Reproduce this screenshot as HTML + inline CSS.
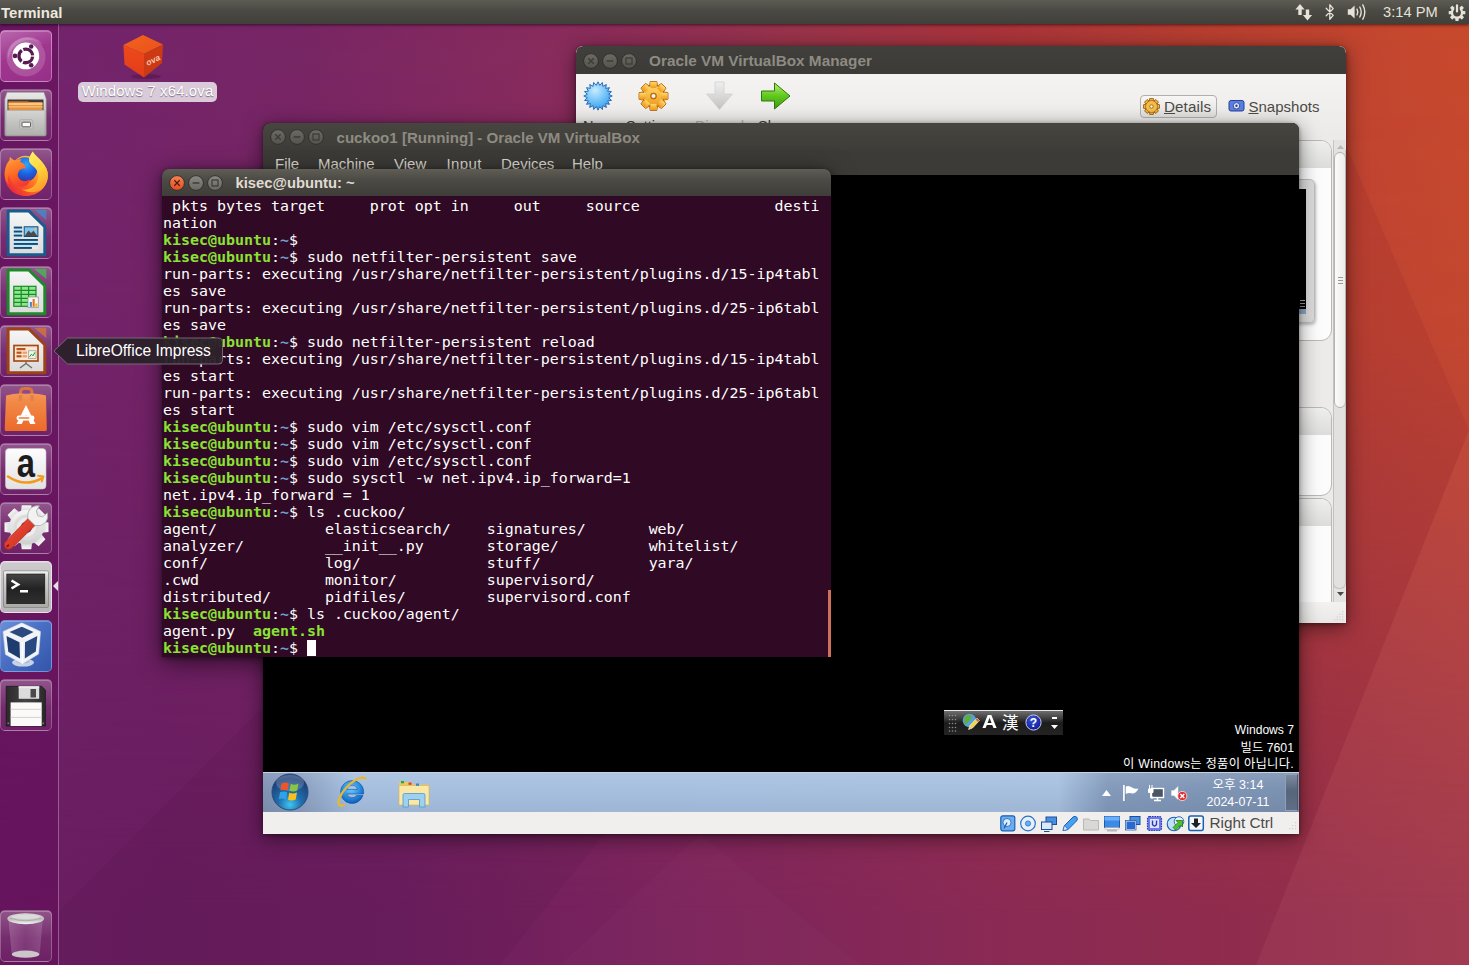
<!DOCTYPE html>
<html><head><meta charset="utf-8"><title>Ubuntu Desktop</title>
<style>
*{box-sizing:border-box;margin:0;padding:0}
html,body{width:1469px;height:965px;overflow:hidden;background:#6b1f5f}
body{position:relative;font-family:"Liberation Sans","Noto Sans CJK KR",sans-serif;font-size:14px;color:#dfdbd2}
.abs{position:absolute}
svg{display:block}
#wall{position:absolute;left:0;top:0;width:1469px;height:965px}
/* top panel */
#panel{position:absolute;left:0;top:0;width:1469px;height:24px;background:linear-gradient(#5d5b54,#4a4943 45%,#403f3a);box-shadow:0 1px 3px rgba(0,0,0,.6);z-index:50}
#panel .ttl{position:absolute;left:1px;top:3.5px;font-weight:bold;font-size:15px;line-height:17px;color:#ece8df;white-space:nowrap}
#panel .clock{position:absolute;left:1383px;top:4px;font-size:14.7px;line-height:17px;color:#e6e2d9;white-space:nowrap}
#panel svg{position:absolute}
/* launcher */
#launcher{position:absolute;left:0;top:24px;width:59px;height:941px;background:rgba(98,10,88,.5);border-right:1px solid rgba(205,160,205,.5);z-index:40}
.tile{position:absolute;left:0;width:52px;height:52px;border-radius:5px;border:1px solid rgba(255,255,255,.25);background:linear-gradient(rgba(255,255,255,.28),rgba(255,255,255,.10) 55%,rgba(255,255,255,.06));overflow:hidden;box-shadow:inset 0 1px 0 rgba(255,255,255,.25)}
.tile svg{position:absolute;left:-1px;top:-1px;width:50px;height:50px}
/* windows */
.win{position:absolute;border-radius:7px 7px 0 0;box-shadow:0 4px 20px rgba(0,0,0,.5),0 1px 4px rgba(0,0,0,.4)}
.tbar{position:absolute;left:0;top:0;right:0;height:28px;border-radius:7px 7px 0 0;background:linear-gradient(#45443f,#3c3b37);}
.tbar .t{position:absolute;top:5px;font-weight:bold;font-size:15px;line-height:17px;white-space:nowrap;color:#8e8b83}
.wb{position:absolute;top:6px;width:16px;height:16px}
pre{font-family:"DejaVu Sans Mono","Liberation Mono",monospace;font-size:14.95px;line-height:17px;color:#fff}
.g{color:#8ae234;font-weight:bold}.b{color:#729fcf;font-weight:bold}
.wm{right:5px;text-align:right;line-height:17px;color:#fff;white-space:nowrap;font-family:"Liberation Sans","Noto Sans CJK KR",sans-serif}
.menu span{position:absolute;top:0;font-size:15px;line-height:17px;color:#dfdbd2;white-space:nowrap}
.box{position:absolute;border:1px solid #b9b8b6;border-radius:11px;background:#fcfcfc;overflow:hidden}
.box i{position:absolute;left:0;right:0;top:0;height:27px;background:linear-gradient(#efefee,#dcdcdb)}
</style></head><body>
<svg id="wall" viewBox="0 0 1469 965" preserveAspectRatio="none">
<defs>
<linearGradient id="wt" x1="0" y1="0" x2="1469" y2="0" gradientUnits="userSpaceOnUse">
<stop offset="0" stop-color="#70226c"/><stop offset=".04" stop-color="#73246c"/><stop offset=".2" stop-color="#782665"/><stop offset=".39" stop-color="#8a2c5c"/><stop offset=".545" stop-color="#99344a"/><stop offset=".68" stop-color="#a9343a"/><stop offset=".817" stop-color="#b73e30"/><stop offset=".95" stop-color="#c5472e"/><stop offset="1" stop-color="#c8492c"/>
</linearGradient>
<linearGradient id="wb2" x1="0" y1="0" x2="1469" y2="0" gradientUnits="userSpaceOnUse">
<stop offset="0" stop-color="#6a1f62"/><stop offset=".12" stop-color="#681c5e"/><stop offset=".27" stop-color="#6b1e5f"/><stop offset=".48" stop-color="#7d245c"/><stop offset=".68" stop-color="#8a2a54"/><stop offset=".85" stop-color="#932f50"/><stop offset="1" stop-color="#9d364e"/>
</linearGradient>
<linearGradient id="wm" x1="0" y1="0" x2="0" y2="965" gradientUnits="userSpaceOnUse">
<stop offset="0" stop-color="#fff" stop-opacity="0"/><stop offset=".35" stop-color="#fff" stop-opacity=".12"/><stop offset=".95" stop-color="#fff" stop-opacity="1"/>
</linearGradient>
<linearGradient id="wdg" x1="1000" y1="0" x2="1330" y2="0" gradientUnits="userSpaceOnUse"><stop offset="0" stop-color="#6a0a28" stop-opacity="0"/><stop offset="1" stop-color="#6a0a28" stop-opacity=".10"/></linearGradient>
<mask id="mk"><rect width="1469" height="965" fill="url(#wm)"/></mask>
</defs>
<rect width="1469" height="965" fill="url(#wt)"/>
<rect width="1469" height="965" fill="url(#wb2)" mask="url(#mk)"/>
<!-- facets -->
<polygon points="58,912 330,640 760,640 500,965 58,965" fill="#000" opacity=".035"/>
<polygon points="560,965 700,834 860,965" fill="#fff" opacity=".016"/>
<polygon points="1303,46 1469,430 1256,965 1000,965 1000,46" fill="url(#wdg)"/>
<polygon points="1469,430 1469,965 1256,965" fill="#ffb0a0" opacity=".045"/>
</svg>

<div id="panel"><span class="ttl">Terminal</span><span class="clock">3:14 PM</span>
<!-- network -->
<svg style="left:1295px;top:3px" width="18" height="18" viewBox="0 0 18 18"><path d="M5 1 L9.6 6.5 H6.7 V12 H3.3 V6.5 H0.4 Z M12.5 17.5 L7.9 12 H10.8 V6.5 H14.2 V12 H17.1 Z" fill="#e6e2d9"/></svg>
<!-- bluetooth -->
<svg style="left:1324px;top:3px" width="12" height="18" viewBox="0 0 12 18"><path d="M2.2 5.2 L9.2 12.4 L5.8 16.3 V1.7 L9.2 5.6 L2.2 12.8" fill="none" stroke="#e6e2d9" stroke-width="1.3" stroke-linejoin="round" stroke-linecap="round"/></svg>
<!-- sound -->
<svg style="left:1347px;top:3px" width="21" height="18" viewBox="0 0 21 18"><path d="M0.8 6.3 H3.6 L7.6 2.6 V15.4 L3.6 11.7 H0.8 Z" fill="#e6e2d9"/><path d="M10 6.2 Q11.6 9 10 11.8 M12.8 4 Q15.6 9 12.8 14 M15.8 1.8 Q19.8 9 15.8 16.2" fill="none" stroke="#e6e2d9" stroke-width="1.4" stroke-linecap="round"/></svg>
<!-- power -->
<svg style="left:1448px;top:3px" width="18" height="18" viewBox="0 0 18 18"><g transform="translate(9 9.600)" fill="#e6e2d9"><g id="pt"><rect x="-1.700" y="-8.300" width="3.400" height="3.600" rx=".6"/></g><use href="#pt" transform="rotate(45)"/><use href="#pt" transform="rotate(90)"/><use href="#pt" transform="rotate(135)"/><use href="#pt" transform="rotate(180)"/><use href="#pt" transform="rotate(225)"/><use href="#pt" transform="rotate(270)"/><use href="#pt" transform="rotate(315)"/><circle r="6.300"/></g><circle cx="9" cy="9.600" r="3.900" fill="#46453f"/><rect x="6.300" y="0" width="5.400" height="8" fill="#4b4a44"/><rect x="7.900" y="1.200" width="2.200" height="8.300" rx="1" fill="#e6e2d9"/></svg>
</div>
<div id="launcher">
<!-- 0 Ubuntu dash -->
<div class="tile" style="top:6px;background:linear-gradient(160deg,#b968ae,#a0378f 45%,#972e88);border-color:rgba(240,190,235,.45)">
<svg viewBox="0 0 50 50"><circle cx="26" cy="27" r="19.500" fill="#fff" opacity=".16"/><path d="M8 30 Q6 14 22 8 Q38 4 44 18 Q40 9 27 10 Q11 13 8 30Z" fill="#fff" opacity=".18"/><circle cx="25.800" cy="25.900" r="13.400" fill="#fff"/>
<circle cx="25.800" cy="25.900" r="6.850" fill="none" stroke="#561c52" stroke-width="3.300" stroke-dasharray="12.750 1.600" stroke-dashoffset="-.8"/>
<g fill="#561c52"><circle cx="15" cy="25.900" r="2.300"/><circle cx="31.200" cy="16.550" r="2.300"/><circle cx="31.200" cy="35.250" r="2.300"/></g></svg></div>
<!-- 1 Files -->
<div class="tile" style="top:65px"><svg viewBox="0 0 50 50">
<defs><linearGradient id="fc" x1="0" y1="0" x2="0" y2="1"><stop offset="0" stop-color="#e9e9e7"/><stop offset="1" stop-color="#a5a5a2"/></linearGradient><linearGradient id="fd" x1="0" y1="0" x2="0" y2="1"><stop offset="0" stop-color="#d5d5d3"/><stop offset="1" stop-color="#b0b0ad"/></linearGradient></defs>
<path d="M7 3.200 H44 L46.200 10 V45.500 Q46.200 47 44.700 47 H6.300 Q4.800 47 4.800 45.500 V10 Z" fill="url(#fc)" stroke="#8f8f8c" stroke-width=".6"/>
<rect x="7.500" y="10.500" width="36" height="11" fill="#3d3b39"/>
<rect x="8.500" y="13" width="34" height="8.500" fill="#e8923c"/><rect x="8.500" y="14.200" width="34" height="1.600" fill="#f8d6a4"/><rect x="8.500" y="17.200" width="34" height="1.300" fill="#f5c080"/><rect x="8.500" y="12.200" width="20" height="1.200" fill="#c96a1c"/>
<rect x="6" y="21.300" width="39" height="25" rx="1.200" fill="url(#fd)" stroke="#9a9a97" stroke-width=".5"/>
<rect x="19.500" y="30.500" width="13.500" height="9.500" rx="2" fill="#c4c4c1" stroke="#a2a29f" stroke-width=".6"/>
<rect x="22" y="33.200" width="8.500" height="4.600" rx=".8" fill="#fbfbfb" stroke="#5e5e5b" stroke-width="1"/>
</svg></div>
<!-- 2 Firefox -->
<div class="tile" style="top:124px"><svg viewBox="0 0 50 50">
<defs><linearGradient id="fg" x1=".9" y1=".1" x2=".15" y2=".95"><stop offset="0" stop-color="#ffe14a"/><stop offset=".3" stop-color="#ffb02e"/><stop offset=".6" stop-color="#ff6a1f"/><stop offset="1" stop-color="#e8243c"/></linearGradient>
<linearGradient id="fy" x1=".3" y1="0" x2=".6" y2="1"><stop offset="0" stop-color="#fff46a"/><stop offset=".5" stop-color="#ffd23a"/><stop offset="1" stop-color="#ff9a2a"/></linearGradient>
<linearGradient id="fh" x1=".2" y1="0" x2=".6" y2="1"><stop offset="0" stop-color="#ff9f3a"/><stop offset=".55" stop-color="#ff6a22"/><stop offset="1" stop-color="#f23a30"/></linearGradient>
<radialGradient id="fb" cx=".55" cy=".3" r=".75"><stop offset="0" stop-color="#2fa8ff"/><stop offset=".55" stop-color="#1c5fe0"/><stop offset="1" stop-color="#3b2d9c"/></radialGradient></defs>
<path d="M32.500 3.600 C35 7.500 39 10 42 14 C46 18.500 48 23 47.900 28 C47.500 39 38 48 26 48 C13 48 4.700 38.500 4.700 27 C4.700 20 7 15 9.500 12.500 L10 9 C11.500 11 13 12 15 12.500 C19 8 25 6.500 30 8.500 C31 6.500 32 5.500 32.500 3.600 Z" fill="url(#fg)"/>
<circle cx="25" cy="21.500" r="12.200" fill="url(#fb)"/>
<path d="M32.500 3.600 C35 7.500 39 10 42 14 C46 18.500 48 23 47.900 28 C47.700 33 45.500 37.500 42 41 C35 46 27 44.500 22 41.500 C30 42.500 37 38 38 30 C38.500 26 37.500 23.500 36.600 22 C34.500 18 30 17 29 13 C28.500 9.500 31 6.500 32.500 3.600 Z" fill="url(#fy)"/>
<path d="M4.700 27 C4.700 20 7 15 9.500 12.500 L10 9 C11.500 11 13 12 15 12.500 C17 11.300 19.500 11 21.500 11.500 L20 14 C23 14.500 25.500 17 26 20.500 C23 20 20.500 21 19 23 C17 26 17.500 29 20 31.500 C23 34 27.500 33.500 30 31 C30 36 25 39.500 19.500 38.500 C12 37 9 31 9.500 26 C7.500 29 7.500 33 9 36.500 C6 34 4.700 30.500 4.700 27 Z" fill="url(#fh)"/>
</svg></div>
<!-- 3 Writer -->
<div class="tile" style="top:183px"><svg viewBox="0 0 50 50">
<defs><linearGradient id="dw" x1="0" y1="0" x2="0" y2="1"><stop offset="0" stop-color="#f6f6f6"/><stop offset="1" stop-color="#dadada"/></linearGradient></defs>
<path d="M34 2.800 H46.300 V13 Z" fill="#3f8ecf" opacity=".75"/>
<path d="M8.100 3.900 H28.800 L44.800 19.800 V47.800 H8.100 Z" fill="url(#dw)" stroke="#1a5a8c" stroke-width="3" stroke-linejoin="round"/>
<g fill="#bfe6f8"><rect x="13.800" y="19.800" width="8.400" height="10"/><rect x="13.800" y="32" width="24.100" height="10"/></g>
<g fill="#154a72"><rect x="13.800" y="19.600" width="8.400" height="1.900"/><rect x="13.800" y="23.600" width="8.400" height="1.900"/><rect x="13.800" y="27.600" width="8.400" height="1.900"/><rect x="13.800" y="32" width="24.100" height="1.900"/><rect x="13.800" y="36" width="24.100" height="1.900"/><rect x="13.800" y="40" width="18" height="1.900"/></g>
<rect x="32" y="38.800" width="6" height="3.400" fill="#e9e9e9"/>
<rect x="24.200" y="19.800" width="13.700" height="9.700" fill="#7fc4ee" stroke="#154a72" stroke-width="1"/><path d="M24.700 29 L28.500 23.500 L31 26 L33.500 23.800 L37.400 29 Z" fill="#4a4a4a"/><circle cx="35.500" cy="21.800" r="1.100" fill="#f4c84a"/>
</svg></div>
<!-- 4 Calc -->
<div class="tile" style="top:242px"><svg viewBox="0 0 50 50">
<defs><linearGradient id="dc" x1="0" y1="0" x2="0" y2="1"><stop offset="0" stop-color="#f6f6f6"/><stop offset="1" stop-color="#dadada"/></linearGradient></defs>
<path d="M34 2.800 H46.300 V13 Z" fill="#43c04f" opacity=".75"/>
<path d="M8.100 3.900 H28.800 L44.800 19.800 V47.800 H8.100 Z" fill="url(#dc)" stroke="#1d8a2a" stroke-width="3" stroke-linejoin="round"/>
<rect x="13.800" y="20.300" width="22.200" height="20" fill="#8be88c"/>
<g stroke="#1d8a2a" stroke-width="1.200" fill="none"><path d="M13.800 24.300 H36 M13.800 28.300 H36 M13.800 32.300 H36 M13.800 36.300 H36 M21.200 20.300 V40.300 M28.600 20.300 V40.300"/><rect x="13.800" y="20.300" width="22.200" height="20"/></g>
<rect x="28" y="31" width="10.300" height="10.600" fill="#f6f6f6" stroke="#9a9a9a" stroke-width=".8"/><rect x="29.800" y="36" width="2.100" height="4.800" fill="#3a8ad0"/><rect x="32.600" y="33" width="2.100" height="7.800" fill="#e8731c"/><rect x="35.300" y="37.500" width="2.100" height="3.300" fill="#e8b51c"/>
</svg></div>
<!-- 5 Impress -->
<div class="tile" style="top:301px"><svg viewBox="0 0 50 50">
<defs><linearGradient id="di" x1="0" y1="0" x2="0" y2="1"><stop offset="0" stop-color="#f6f6f6"/><stop offset="1" stop-color="#dadada"/></linearGradient></defs>
<path d="M34 2.800 H46.300 V13 Z" fill="#d9763a" opacity=".75"/>
<path d="M8.100 3.900 H28.800 L44.800 19.800 V47.800 H8.100 Z" fill="url(#di)" stroke="#9c4216" stroke-width="3" stroke-linejoin="round"/>
<rect x="14" y="20.500" width="24" height="15.500" fill="#fbe6d4" stroke="#a84a18" stroke-width="1.700"/>
<rect x="16.500" y="23" width="9" height="2.200" fill="#bc5218"/><rect x="16.500" y="26.600" width="5" height="2.200" fill="#bc5218"/><rect x="16.500" y="30.200" width="5" height="2.200" fill="#bc5218"/><rect x="22.500" y="26.600" width="4.500" height="2.200" fill="#e6a06a"/><rect x="22.500" y="30.200" width="4.500" height="2.200" fill="#e6a06a"/>
<rect x="28.500" y="25.800" width="7.500" height="7.500" fill="#e9f5e4" stroke="#8a8a8a" stroke-width=".6"/><path d="M29.500 31.800 L31.500 29.300 L33 30.800 L35 27.300" stroke="#2a8a2a" stroke-width="1" fill="none"/>
<path d="M26 36.500 V39 M26 38.500 L20 43 M26 38.500 L32 43" stroke="#6f6e68" stroke-width="1.400" fill="none"/>
</svg></div>
<!-- 6 Software -->
<div class="tile" style="top:360px"><svg viewBox="0 0 50 50">
<defs><linearGradient id="sb" x1="0" y1="0" x2="0" y2="1"><stop offset="0" stop-color="#f5955a"/><stop offset=".2" stop-color="#f28a48"/><stop offset="1" stop-color="#ec6a2a"/></linearGradient></defs>
<path d="M20.500 17 V9 Q20.500 4.500 24 4.500 H28.500 Q32 4.500 32 9 V17" fill="none" stroke="#d9743e" stroke-width="3.200"/>
<path d="M6 11.500 Q16 8.500 26 9.800 Q36 8.500 46 11.500 L46.800 45.500 Q46.800 47 45.300 47 H6.200 Q4.700 47 4.700 45.500 Z" fill="url(#sb)"/>
<path d="M20.500 17 V11 M32 17 V11" stroke="#e0804a" stroke-width="3.200" fill="none"/>
<path d="M26 21 L35.500 40 H30.200 L26 30.500 L21.800 40 H16.500 Z" fill="#fff"/>
<rect x="16.500" y="31.600" width="18" height="4.800" rx="2.400" fill="#fff"/><rect x="18.500" y="33.200" width="11" height="1.600" rx=".8" fill="#ee7a38"/>
</svg></div>
<!-- 7 Amazon -->
<div class="tile" style="top:419px"><svg viewBox="0 0 50 50">
<defs><linearGradient id="am" x1="0" y1="0" x2="0" y2="1"><stop offset="0" stop-color="#fdfdfd"/><stop offset="1" stop-color="#e2e2e2"/></linearGradient></defs>
<rect x="5.500" y="5.500" width="40.500" height="40.500" rx="3.500" fill="url(#am)" stroke="#c8c8c8" stroke-width=".6"/>
<text x="0" y="0" font-family="Liberation Sans, sans-serif" font-weight="bold" font-size="41" text-anchor="middle" fill="#1c1c1c" transform="translate(25.800 34) scale(.8 1)">a</text>
<path d="M8 33.500 Q24 44.500 41.500 35.500" stroke="#f39a1e" stroke-width="2.600" fill="none" stroke-linecap="round"/><path d="M38 32.800 L43.500 33.500 L41.800 38.500" fill="none" stroke="#f39a1e" stroke-width="1.900" stroke-linejoin="round" stroke-linecap="round"/>
</svg></div>
<!-- 8 Settings -->
<div class="tile" style="top:478px"><svg viewBox="0 0 50 50">
<defs><linearGradient id="gr" x1="0" y1="0" x2="0" y2="1"><stop offset="0" stop-color="#f6f6f6"/><stop offset="1" stop-color="#cfcfcf"/></linearGradient><linearGradient id="wr" x1="0" y1="0" x2="1" y2="1"><stop offset="0" stop-color="#f0553e"/><stop offset="1" stop-color="#c8271a"/></linearGradient></defs>
<g transform="translate(26.500 25.200)"><g fill="url(#gr)">
<g id="tth"><path d="M-4.800 -22 H4.800 L5.800 -14 H-5.800 Z"/></g>
<use href="#tth" transform="rotate(45)"/><use href="#tth" transform="rotate(90)"/><use href="#tth" transform="rotate(135)"/><use href="#tth" transform="rotate(180)"/><use href="#tth" transform="rotate(225)"/><use href="#tth" transform="rotate(270)"/><use href="#tth" transform="rotate(315)"/>
<circle r="17.300"/></g><circle r="12.800" fill="#dcdcdc"/><circle r="9.500" fill="#ececec"/><circle r="5.600" fill="#7d2a72"/></g>
<path d="M4.800 40.500 Q3.200 43.800 5.600 46.400 Q8.500 48.500 11.500 46.500 L35 23.500 L28 16.500 Z" fill="url(#wr)" stroke="#a82014" stroke-width=".6"/>
<path d="M28 16.500 Q26.500 9.500 32 5.300 Q35.500 3 39.500 3.800 L36.300 9 L37.800 13.800 L42.700 14.800 L47.300 10.800 Q49 16 45.500 20.500 Q41 25 35 23.500 Z" fill="#f2f2f2" stroke="#a0a0a0" stroke-width=".7"/>
<ellipse cx="7.800" cy="43.800" rx="1.800" ry="1.100" fill="#8a1a10" transform="rotate(-45 7.800 43.800)"/>
</svg></div>
<!-- 9 Terminal (active) -->
<div class="tile" style="top:537px;background:linear-gradient(#cdc9cd,#c4c0c4 50%,#b9b5ba);border-color:rgba(235,228,235,.9)"><svg viewBox="0 0 50 50">
<defs><linearGradient id="tm" x1="0" y1="0" x2="0" y2="1"><stop offset="0" stop-color="#454545"/><stop offset=".5" stop-color="#222"/><stop offset="1" stop-color="#303030"/></linearGradient><linearGradient id="tf" x1="0" y1="0" x2="0" y2="1"><stop offset="0" stop-color="#f4f4f4"/><stop offset=".2" stop-color="#d4d4d2"/><stop offset="1" stop-color="#a9a9a6"/></linearGradient></defs>
<rect x="3.500" y="9.800" width="45" height="36.700" rx="1.500" fill="url(#tf)" stroke="#7f7f7c" stroke-width=".7"/>
<rect x="6.800" y="13" width="38" height="29.700" fill="url(#tm)" stroke="#111" stroke-width=".6"/>
<path d="M11.500 19.500 L18 23.500 L11.500 27.500" fill="none" stroke="#fff" stroke-width="2.600"/><rect x="20" y="29" width="8" height="2.500" fill="#fff"/>
</svg></div>
<!-- 10 VirtualBox -->
<div class="tile" style="top:596px;background:linear-gradient(135deg,#6c8fd9,#4a6fc2 45%,#3355aa);border-color:rgba(150,175,235,.55)"><svg viewBox="0 0 50 50">
<ellipse cx="23" cy="42.600" rx="11" ry="4" fill="#c7d2e8"/><path d="M16.500 33 H29.500 V42 Q23 45 16.500 42 Z" fill="#a9b8d6"/>
<path d="M21.800 2.800 L40.600 11.500 L38.700 34 L22.400 44 L5.400 34.500 L3 11.500 Z" fill="#f0f3f8" stroke="#c8d0de" stroke-width=".5"/>
<path d="M21.800 6.800 L33.500 12 L22.300 17.800 L9.500 12 Z" fill="#2a4a7f"/>
<path d="M6.500 16 L19.500 22.300 L20 38.500 L8.300 31.800 Z" fill="#1f3c6e"/>
<path d="M37.300 16 L25 22.300 L24.800 38.500 L35.800 31.500 Z" fill="#27497f"/>
<path d="M22.400 21.500 V44" stroke="#fff" stroke-width="1"/>
</svg></div>
<!-- 11 Floppy -->
<div class="tile" style="top:655px"><svg viewBox="0 0 50 50">
<defs><linearGradient id="fl" x1="0" y1="0" x2="1" y2="0"><stop offset="0" stop-color="#2a2a2a"/><stop offset=".5" stop-color="#444"/><stop offset="1" stop-color="#2a2a2a"/></linearGradient></defs>
<path d="M6.200 7.300 H41.500 L45.400 11 V47 H6.200 Z" fill="url(#fl)" stroke="#151515" stroke-width=".7"/>
<rect x="18.700" y="7.300" width="20.500" height="12.500" fill="#dcdcdc"/><rect x="18.700" y="7.300" width="20.500" height="2" fill="#ececec"/><rect x="30.500" y="10" width="5.500" height="8.500" fill="#4a4a4a"/>
<rect x="10.600" y="23.400" width="31.100" height="23.600" fill="#fafafa"/><path d="M10.600 30.300 H41.700 M10.600 38.400 H41.700" stroke="#e0c4c4" stroke-width=".9"/>
<rect x="7.500" y="43.500" width="1.600" height="1.600" fill="#777"/><rect x="42.500" y="43.500" width="1.600" height="1.600" fill="#777"/>
</svg></div>
<!-- Trash -->
<div class="tile" style="top:886px;height:52px"><svg viewBox="0 0 50 50">
<defs><linearGradient id="tg" x1="0" y1="0" x2="1" y2="0"><stop offset="0" stop-color="#c9a0c6" stop-opacity=".34"/><stop offset=".5" stop-color="#a870a4" stop-opacity=".22"/><stop offset="1" stop-color="#c9a0c6" stop-opacity=".3"/></linearGradient><linearGradient id="tr" x1="0" y1="0" x2="0" y2="1"><stop offset="0" stop-color="#dedede"/><stop offset=".55" stop-color="#bdbdbd"/><stop offset="1" stop-color="#f6f6f6"/></linearGradient></defs>
<path d="M8.500 10 L11.800 44.300 Q25.600 49 39.700 44.300 L42.600 10 Z" fill="url(#tg)"/>
<ellipse cx="25.600" cy="44.200" rx="13.800" ry="3.600" fill="#d2d2d0" opacity=".92"/>
<ellipse cx="25.700" cy="8.700" rx="18.400" ry="5.500" fill="url(#tr)"/>
<ellipse cx="25.700" cy="7.500" rx="15.600" ry="3.200" fill="#c9c9c7"/><ellipse cx="25.700" cy="6.800" rx="14" ry="2.200" fill="#dcdcda"/>
<path d="M10 8 Q25.700 13.500 41.400 8" fill="none" stroke="#a9a9a9" stroke-width=".9"/>
</svg></div>
<!-- active arrow -->
<svg class="abs" style="left:53px;top:557px" width="5" height="10" viewBox="0 0 5 10"><path d="M5 0 V10 L0 5 Z" fill="#e8dce8"/></svg>
</div>
<!-- window button symbols -->
<svg width="0" height="0" style="position:absolute"><defs>
<linearGradient id="bg0" x1="0" y1="0" x2="0" y2="1"><stop offset="0" stop-color="#6c6a63"/><stop offset="1" stop-color="#55534d"/></linearGradient>
<linearGradient id="bg1" x1="0" y1="0" x2="0" y2="1"><stop offset="0" stop-color="#8a8880"/><stop offset="1" stop-color="#6a6861"/></linearGradient>
<linearGradient id="bgr" x1="0" y1="0" x2="0" y2="1"><stop offset="0" stop-color="#f58357"/><stop offset="1" stop-color="#e24d1f"/></linearGradient>
<g id="bC"><circle cx="8" cy="8" r="7.400" fill="url(#bg0)" stroke="#2f2e2a" stroke-width=".9"/><path d="M5.300 5.300 L10.700 10.700 M10.700 5.300 L5.300 10.700" stroke="#3e3d38" stroke-width="1.500"/></g>
<g id="bM"><circle cx="8" cy="8" r="7.400" fill="url(#bg0)" stroke="#2f2e2a" stroke-width=".9"/><path d="M4.600 8 H11.400" stroke="#3e3d38" stroke-width="1.600"/></g>
<g id="bX"><circle cx="8" cy="8" r="7.400" fill="url(#bg0)" stroke="#2f2e2a" stroke-width=".9"/><rect x="5" y="5" width="6" height="6" fill="none" stroke="#3e3d38" stroke-width="1.300"/></g>
<g id="aC"><circle cx="8" cy="8" r="7.400" fill="url(#bgr)" stroke="#2f2e2a" stroke-width=".9"/><path d="M5.300 5.300 L10.700 10.700 M10.700 5.300 L5.300 10.700" stroke="#4e1a0c" stroke-width="1.250"/></g>
<g id="aM"><circle cx="8" cy="8" r="7.400" fill="url(#bg1)" stroke="#2f2e2a" stroke-width=".9"/><path d="M4.600 8 H11.400" stroke="#3a3934" stroke-width="1.400"/></g>
<g id="aX"><circle cx="8" cy="8" r="7.400" fill="url(#bg1)" stroke="#2f2e2a" stroke-width=".9"/><rect x="5" y="5" width="6" height="6" fill="none" stroke="#3a3934" stroke-width="1.150"/></g>
</defs></svg>

<!-- desktop icon -->
<svg class="abs" style="left:120px;top:33px" width="46" height="48" viewBox="0 0 46 48">
<defs><linearGradient id="cb1" x1="0" y1="0" x2="1" y2="1"><stop offset="0" stop-color="#f2641e"/><stop offset="1" stop-color="#e9501a"/></linearGradient><linearGradient id="cb2" x1="0" y1="0" x2="0" y2="1"><stop offset="0" stop-color="#ee4a1c"/><stop offset="1" stop-color="#e23c18"/></linearGradient></defs>
<ellipse cx="26" cy="43.500" rx="15" ry="2.500" fill="#000" opacity=".18"/>
<path d="M23 2 L43 11.500 L24 21 L3.400 12 Z" fill="url(#cb1)"/>
<path d="M3.400 12 L24 21 V44.600 L4.500 31.500 Z" fill="url(#cb2)"/>
<path d="M43 11.500 L24 21 V44.600 L42 30 Z" fill="#cc3a14"/>
<text x="33" y="30" font-family="Liberation Sans, sans-serif" font-weight="bold" font-style="italic" font-size="8.500" fill="#f7c4ae" text-anchor="middle" transform="rotate(-27 33 27)">ova</text>
</svg>
<div class="abs" style="left:78px;top:82px;width:139px;height:20px;border-radius:5px;background:#d9cbd9;"></div>
<div class="abs" id="dlabel" style="left:78px;top:83px;width:139px;text-align:center;font-size:14.900px;letter-spacing:.15px;line-height:17px;color:#fff;text-shadow:0 1px 1px rgba(60,30,60,.55);white-space:nowrap">Windows 7 x64.ova</div>

<!-- VirtualBox Manager -->
<div class="win" id="vbm" style="left:576px;top:46px;width:770px;height:577px;background:#f1f0ef;border-radius:7px 7px 0 0;overflow:hidden">
 <div class="tbar" style="background:linear-gradient(#403f3b,#3c3b37)"><svg class="wb" style="top:6.500px;left:7px"><use href="#bC"/></svg><svg class="wb" style="top:6.500px;left:26px"><use href="#bM"/></svg><svg class="wb" style="top:6.500px;left:45px"><use href="#bX"/></svg><span class="t" id="t_vbm" style="left:73px;top:6px;font-size:15.340px">Oracle VM VirtualBox Manager</span></div>
 <div class="abs" style="left:0;top:28px;width:770px;height:66px;background:linear-gradient(#f4f3f2,#eceae8)"></div>
 <!-- toolbar icons -->
 <svg class="abs" style="left:7px;top:35px" width="30" height="30" viewBox="0 0 30 30"><defs><radialGradient id="nb" cx=".4" cy=".3" r=".8"><stop offset="0" stop-color="#c6ecff"/><stop offset=".6" stop-color="#5fb8f5"/><stop offset="1" stop-color="#3b95e0"/></radialGradient></defs>
 <polygon points="15.00,0.80 16.69,4.33 19.39,1.49 19.90,5.38 23.35,3.51 22.64,7.36 26.49,6.65 24.62,10.10 28.51,10.61 25.67,13.31 29.20,15.00 25.67,16.69 28.51,19.39 24.62,19.90 26.49,23.35 22.64,22.64 23.35,26.49 19.90,24.62 19.39,28.51 16.69,25.67 15.00,29.20 13.31,25.67 10.61,28.51 10.10,24.62 6.65,26.49 7.36,22.64 3.51,23.35 5.38,19.90 1.49,19.39 4.33,16.69 0.80,15.00 4.33,13.31 1.49,10.61 5.38,10.10 3.51,6.65 7.36,7.36 6.65,3.51 10.10,5.38 10.61,1.49 13.31,4.33" fill="url(#nb)" stroke="#1d63b4" stroke-width=".9" stroke-linejoin="miter"/></svg>
 <svg class="abs" style="left:62px;top:35px" width="31" height="30" viewBox="0 0 31 30"><defs><linearGradient id="og" x1="0" y1="0" x2="0" y2="1"><stop offset="0" stop-color="#ffd76a"/><stop offset="1" stop-color="#f09a1c"/></linearGradient></defs>
 <g transform="translate(15.500 15)"><g fill="url(#og)" stroke="#b9690e" stroke-width=".9" stroke-linejoin="round"><path id="gt" d="M-3.300 -14.500 H3.300 L4.300 -9 H-4.300 Z"/><use href="#gt" transform="rotate(45)"/><use href="#gt" transform="rotate(90)"/><use href="#gt" transform="rotate(135)"/><use href="#gt" transform="rotate(180)"/><use href="#gt" transform="rotate(225)"/><use href="#gt" transform="rotate(270)"/><use href="#gt" transform="rotate(315)"/></g><circle r="10.600" fill="url(#og)" stroke="#b9690e" stroke-width=".9"/><circle r="9.900" fill="url(#og)"/><g fill="url(#og)"><rect x="-3" y="-13.900" width="6" height="6"/><rect x="-3" y="7.900" width="6" height="6"/><rect x="-13.900" y="-3" width="6" height="6"/><rect x="7.900" y="-3" width="6" height="6"/><g transform="rotate(45)"><rect x="-3" y="-13.900" width="6" height="6"/><rect x="-3" y="7.900" width="6" height="6"/><rect x="-13.900" y="-3" width="6" height="6"/><rect x="7.900" y="-3" width="6" height="6"/></g></g><circle r="2.700" fill="#f7f4ee" stroke="#b9690e" stroke-width="1.300"/></g></svg>
 <svg class="abs" style="left:129px;top:35px" width="29" height="30" viewBox="0 0 29 30"><defs><linearGradient id="dg" x1="0" y1="0" x2="0" y2="1"><stop offset="0" stop-color="#efefef"/><stop offset="1" stop-color="#c2c2c2"/></linearGradient></defs><path d="M10 1 H19 V13 H27.500 L14.500 28.500 L1.500 13 H10 Z" fill="url(#dg)" stroke="#d0d0d0" stroke-width=".8"/></svg>
 <svg class="abs" style="left:184px;top:35px" width="31" height="30" viewBox="0 0 31 30"><defs><linearGradient id="sg" x1="0" y1="0" x2="0" y2="1"><stop offset="0" stop-color="#b6f06a"/><stop offset=".5" stop-color="#5fc81e"/><stop offset="1" stop-color="#3f9a10"/></linearGradient></defs><path d="M1.500 10 H14.500 V2 L30 15 L14.500 28 V20 H1.500 Z" fill="url(#sg)" stroke="#2c7a0a" stroke-width="1" stroke-linejoin="round"/></svg>
 <div class="abs" style="left:7px;top:72px;font-size:14.500px;line-height:17px;color:#3c3b37">New</div>
 <div class="abs" style="left:50px;top:72px;font-size:14.500px;line-height:17px;color:#3c3b37">Settings</div>
 <div class="abs" style="left:119px;top:72px;font-size:14.500px;line-height:17px;color:#b6b4b0">Discard</div>
 <div class="abs" style="left:182px;top:72px;font-size:14.500px;line-height:17px;color:#3c3b37">Show</div>
 <!-- Details / Snapshots -->
 <div class="abs" style="left:564px;top:49px;width:77px;height:23px;border:1px solid #b1afab;border-radius:4px;background:linear-gradient(#f7f6f5,#e4e2df)"></div>
 <svg class="abs" style="left:567px;top:52px" width="17" height="17" viewBox="0 0 17 17"><g transform="translate(8.500 8.500)"><g fill="#f3b13a" stroke="#8a5a10" stroke-width=".8"><path id="g2" d="M-1.800 -8 H1.800 L2.300 -5 H-2.300 Z"/><use href="#g2" transform="rotate(45)"/><use href="#g2" transform="rotate(90)"/><use href="#g2" transform="rotate(135)"/><use href="#g2" transform="rotate(180)"/><use href="#g2" transform="rotate(225)"/><use href="#g2" transform="rotate(270)"/><use href="#g2" transform="rotate(315)"/><circle r="5.800"/></g><circle r="5.400" fill="#f6bd4a"/><circle r="1.700" fill="#fff7e0" stroke="#8a5a10" stroke-width=".8"/></g></svg>
 <div class="abs" id="t_det" style="left:588px;top:52px;font-size:15.200px;letter-spacing:.1px;line-height:18px;color:#4c4b47"><u>D</u>etails</div>
 <svg class="abs" style="left:652px;top:53px" width="17" height="14" viewBox="0 0 17 14"><rect x="1" y="1.500" width="15" height="10.500" rx="2" fill="#5a7fe0" stroke="#2a3f9a" stroke-width="1"/><circle cx="8.500" cy="6.800" r="3.200" fill="#e9eefc" stroke="#2a3f9a" stroke-width=".9"/><circle cx="8.500" cy="6.800" r="1.200" fill="#2a3f9a"/></svg>
 <div class="abs" id="t_snap" style="left:672.500px;top:52px;font-size:15px;line-height:18px;color:#4c4b47"><u>S</u>napshots</div>
 <!-- right side content (visible strip) -->
 <div class="abs" style="left:700px;top:94px;width:57px;height:462px;background:#ecebea"></div>
 <div class="box" style="left:660px;top:94px;width:96px;height:201px"><i></i></div>
 <div class="abs" style="left:690px;top:133px;width:49px;height:144px;border-radius:5px;background:linear-gradient(90deg,#e9e9e9,#dcdcdc);border:1px solid #bdbdbd;box-shadow:1px 2px 3px rgba(0,0,0,.25)"></div>
 <div class="abs" style="left:690px;top:143px;width:40px;height:125px;background:#000"></div><div class="abs" style="left:723px;top:263px;width:7px;height:5px;background:#8fa5c6"></div><div class="abs" style="left:724px;top:254px;width:5px;height:1px;background:#aaa;box-shadow:0 3px 0 #999,0 6px 0 #888"></div>
 <div class="box" style="left:660px;top:361px;width:96px;height:89px"><i></i></div>
 <div class="box" style="left:660px;top:452px;width:96px;height:130px"><i></i></div>
 <!-- scrollbar -->
 <div class="abs" style="left:757px;top:94px;width:13px;height:462px;background:#e4e3e2;border-left:1px solid #c6c5c3"></div><div class="abs" style="left:757px;top:104px;width:13px;height:439px;border:1px solid #c2c1be;border-radius:0 0 6px 6px;border-top:none;background:#e2e1e0"></div>
 <div class="abs" style="left:758px;top:106px;width:12px;height:256px;border:1px solid #b4b3b0;border-radius:6px;background:linear-gradient(90deg,#fbfbfb,#ebebea)"></div>
 <svg class="abs" style="left:761px;top:99px" width="7" height="4" viewBox="0 0 7 4"><path d="M0 4 L3.500 0 L7 4 Z" fill="#b9b8b5"/></svg>
 <svg class="abs" style="left:761px;top:546px" width="7" height="4" viewBox="0 0 7 4"><path d="M0 0 L3.500 4 L7 0 Z" fill="#4a4945"/></svg>
 <div class="abs" style="left:762px;top:231px;width:5px;height:1px;background:#9a9996;box-shadow:0 3px 0 #9a9996,0 6px 0 #9a9996"></div>
 <div class="abs" style="left:700px;top:556px;width:70px;height:21px;background:linear-gradient(#f3f2f1,#e9e8e6)"></div><svg class="abs" style="left:758px;top:565px" width="10" height="10" viewBox="0 0 10 10"><g fill="#cfcdc9"><rect x="8" y="0" width="1.200" height="1.200"/><rect x="5.300" y="2.700" width="1.200" height="1.200"/><rect x="8" y="2.700" width="1.200" height="1.200"/><rect x="2.600" y="5.400" width="1.200" height="1.200"/><rect x="5.300" y="5.400" width="1.200" height="1.200"/><rect x="8" y="5.400" width="1.200" height="1.200"/><rect x="0" y="8" width="1.200" height="1.200"/><rect x="2.600" y="8" width="1.200" height="1.200"/><rect x="5.300" y="8" width="1.200" height="1.200"/><rect x="8" y="8" width="1.200" height="1.200"/></g></svg>
</div>
<!-- VM window -->
<div class="win" id="vm" style="left:263px;top:123px;width:1036px;height:711px;background:#000">
 <div class="tbar" style="height:52px;background:linear-gradient(#46453f,#3e3d39 26px,#3c3b37 28px,#3c3b37)"><svg class="wb" style="top:5.500px;left:7px"><use href="#bC"/></svg><svg class="wb" style="top:5.500px;left:26px"><use href="#bM"/></svg><svg class="wb" style="top:5.500px;left:45px"><use href="#bX"/></svg><span class="t" id="t_vm" style="left:73.500px;top:5.500px;font-size:15.100px">cuckoo1 [Running] - Oracle VM VirtualBox</span>
  <div class="menu abs" style="left:0;top:32px"><span id="m1" style="left:12px">File</span><span id="m2" style="left:55px">Machine</span><span id="m3" style="left:131px">View</span><span id="m4" style="left:183.500px;letter-spacing:.4px">Input</span><span id="m5" style="left:238px">Devices</span><span id="m6" style="left:309px">Help</span></div>
 </div>
 <!-- IME bar -->
 <div class="abs" style="left:681px;top:587px;width:119px;height:25px;background:linear-gradient(#e8e8e8 0,#e8e8e8 1px,#6e6e6e 1px,#3a3a3a 9px,#1c1c1c 13px,#242424 25px)"></div>
 <svg class="abs" style="left:685px;top:591px" width="9" height="18" viewBox="0 0 9 18"><g fill="#8c8c8c"><circle cx="1.500" cy="1.500" r=".8"/><circle cx="4.500" cy="1.500" r=".8"/><circle cx="7.500" cy="1.500" r=".8"/><circle cx="1.500" cy="5.500" r=".8"/><circle cx="4.500" cy="5.500" r=".8"/><circle cx="7.500" cy="5.500" r=".8"/><circle cx="1.500" cy="9.500" r=".8"/><circle cx="4.500" cy="9.500" r=".8"/><circle cx="7.500" cy="9.500" r=".8"/><circle cx="1.500" cy="13.500" r=".8"/><circle cx="4.500" cy="13.500" r=".8"/><circle cx="7.500" cy="13.500" r=".8"/><circle cx="1.500" cy="17" r=".8"/><circle cx="4.500" cy="17" r=".8"/><circle cx="7.500" cy="17" r=".8"/></g></svg>
 <svg class="abs" style="left:699px;top:590px" width="18" height="18" viewBox="0 0 18 18"><circle cx="7.500" cy="7.500" r="6.800" fill="#5aa0d8"/><path d="M3 4 Q6 1 9 2 Q11 5 8 7 Q5 9 4 12 Q1 9 3 4 Z M10 9 Q13 8 13.500 11 Q12 13.500 9.500 13.500 Z" fill="#5fae3a"/><path d="M6.500 16.500 L8 12.500 L15 5 L17.500 7.500 L10.500 15 Z" fill="#f0d44a" stroke="#fff" stroke-width=".6"/><path d="M15 5 L17.500 7.500 L16 9 L13.600 6.500Z" fill="#c46a4a"/></svg>
 <div class="abs" style="left:719px;top:588px;font-weight:bold;font-size:19px;line-height:22px;color:#fff;font-family:'Liberation Sans',sans-serif;transform:scaleX(1.1);transform-origin:0 0">A</div>
 <div class="abs" style="left:739px;top:588px;font-size:16.500px;line-height:22px;color:#fff;font-family:'Noto Sans CJK KR','Noto Sans CJK JP','Noto Sans CJK SC',sans-serif">漢</div>
 <svg class="abs" style="left:762px;top:591px" width="17" height="17" viewBox="0 0 17 17"><defs><radialGradient id="qg" cx=".4" cy=".3" r=".8"><stop offset="0" stop-color="#3a55d8"/><stop offset="1" stop-color="#0a1490"/></radialGradient></defs><circle cx="8.500" cy="8.500" r="7.600" fill="url(#qg)" stroke="#c8d0f0" stroke-width="1"/><text x="8.500" y="12.800" text-anchor="middle" font-family="Liberation Sans, sans-serif" font-weight="bold" font-size="12" fill="#fff">?</text></svg>
 <div class="abs" style="left:789px;top:594px;width:5px;height:2px;background:#fff"></div>
 <svg class="abs" style="left:788px;top:602px" width="7" height="4" viewBox="0 0 7 4"><path d="M0 0 H7 L3.500 4 Z" fill="#fff"/></svg>
 <!-- watermark -->
 <div class="abs wm" id="wmk" style="top:599px;font-size:12.100px">Windows 7</div><div class="abs wm" style="top:616.500px;font-size:12.300px">빌드 7601</div><div class="abs wm" id="wmk3" style="top:633px;font-size:12.300px;letter-spacing:.28px">이 Windows는 정품이 아닙니다.</div>
 <!-- taskbar -->
 <div class="abs" style="left:0;top:649px;width:1036px;height:40px;background:linear-gradient(90deg,#7f93b4 0,#8b9fc0 40px,#a6bfdf 90px,#a7c0df 795px,#8299ba 845px,#7b91b1 1036px);border-top:1px solid #c3d2e6"></div>
 <div class="abs" style="left:0;top:650px;width:1036px;height:39px;background:linear-gradient(rgba(255,255,255,.10),rgba(255,255,255,0) 45%,rgba(0,0,0,.05))"></div>
 <!-- start orb -->
 <svg class="abs" style="left:8px;top:650px" width="38" height="38" viewBox="0 0 38 38"><defs><radialGradient id="orb" cx=".5" cy=".85" r=".9"><stop offset="0" stop-color="#3fc5f0"/><stop offset=".35" stop-color="#1f6fae"/><stop offset=".8" stop-color="#1d3f78"/><stop offset="1" stop-color="#3c5a8c"/></radialGradient></defs>
 <circle cx="19" cy="19" r="18" fill="url(#orb)" stroke="#2a4a7c" stroke-width="1"/><ellipse cx="19" cy="10" rx="14" ry="8" fill="#fff" opacity=".18"/>
 <path d="M10.500 10.500 Q14 8.500 17.800 10.500 L16.500 17.500 Q13 15.800 9.300 17.500 Z" fill="#f0552a"/><path d="M19.800 10.800 Q23.500 12.800 27.500 10.500 L26.200 17.500 Q22.500 19.500 18.500 17.800 Z" fill="#8cc63f"/><path d="M9 19.300 Q12.500 17.500 16.200 19.500 L15 26.500 Q11.500 24.500 7.800 26.300 Z" fill="#2ea3e6"/><path d="M18.200 19.800 Q22 21.500 26 19.500 L24.700 26.500 Q21 28.500 17 26.800 Z" fill="#fbc11a"/></svg>
 <!-- IE -->
 <svg class="abs" style="left:72px;top:652px" width="34" height="34" viewBox="0 0 34 34"><defs><radialGradient id="ie" cx=".45" cy=".35" r=".8"><stop offset="0" stop-color="#6fd0ff"/><stop offset=".6" stop-color="#1a7fd6"/><stop offset="1" stop-color="#0a3f9a"/></radialGradient></defs>
 <path d="M17 5.500 A11.500 11.500 0 1 0 28 20.500 H21.500 A5.500 5.500 0 0 1 11.800 19 H28.500 A11.500 11.500 0 0 0 17 5.500 Z M11.900 14.500 A5.300 5.300 0 0 1 22.300 14.500 Z" fill="url(#ie)" stroke="#0a3f9a" stroke-width=".5"/>
 <path d="M30.500 3.500 Q25 0.500 15 9 Q5 18 3.500 27 Q3 32 9 30" fill="none" stroke="#e8b92c" stroke-width="2.200" stroke-linecap="round"/></svg>
 <!-- Explorer -->
 <svg class="abs" style="left:134px;top:655px" width="34" height="30" viewBox="0 0 34 30"><path d="M2 4 H14 L16 6.500 H32 V27 H2 Z" fill="#e8c866"/><rect x="2" y="7.500" width="30" height="19.500" fill="#fae8a4" stroke="#d8b85a" stroke-width=".7"/><rect x="4" y="3" width="3" height="2.300" fill="#2aa83a"/><rect x="11.500" y="4.500" width="3" height="2.300" fill="#d8402a"/><rect x="19" y="5.500" width="3" height="2.300" fill="#2a8ad8"/>
 <path d="M6 17 Q6 15.500 7.500 15.500 H26.500 Q28 15.500 28 17 V29 H22.500 V21.500 H11.500 V29 H6 Z" fill="#9fd0f0" stroke="#4a9ad0" stroke-width=".8"/></svg>
 <!-- tray -->
 <svg class="abs" style="left:839px;top:667px" width="9" height="6" viewBox="0 0 9 6"><path d="M0 6 L4.500 0 L9 6 Z" fill="#fff"/></svg>
 <svg class="abs" style="left:859px;top:661px" width="18" height="18" viewBox="0 0 18 18"><path d="M2 1 V17" stroke="#fff" stroke-width="1.800"/><path d="M3.500 2.500 Q7 1 10 3.500 Q13 5.500 16.500 4.500 Q14 9.500 10.500 9.500 Q7 8.500 3.500 10 Z" fill="#fff"/><path d="M2 1 V17" stroke="#5a6a80" stroke-width=".4" transform="translate(1.200 0)"/></svg>
 <svg class="abs" style="left:884px;top:661px" width="18" height="18" viewBox="0 0 18 18"><rect x="4.500" y="4.500" width="12" height="9" fill="#4a5566" stroke="#fff" stroke-width="1.400"/><path d="M7 16.500 H14 M10.500 13.500 V16.500" stroke="#fff" stroke-width="1.400"/><path d="M2.500 1 V5 M5 1 V5 M1.500 5 H6 V8.500 H1.500 Z M3.700 8.500 V14 H6" fill="#fff" stroke="#fff" stroke-width="1"/></svg>
 <svg class="abs" style="left:907px;top:661px" width="18" height="18" viewBox="0 0 18 18"><path d="M1.500 6.500 H4 L8 2.500 V15.500 L4 11.500 H1.500 Z" fill="#fff" stroke="#dfe6f0" stroke-width=".5"/><circle cx="12.300" cy="12" r="4.600" fill="#e32a2a" stroke="#fff" stroke-width=".7"/><path d="M10.300 10 L14.300 14 M14.300 10 L10.300 14" stroke="#fff" stroke-width="1.500"/></svg>
 <div class="abs" id="wclk" style="left:925px;top:654px;width:100px;text-align:center;font-size:12.500px;line-height:16.800px;color:#fff;white-space:nowrap;font-family:'Liberation Sans','Noto Sans CJK KR',sans-serif">오후 3:14<br>2024-07-11</div>
 <div class="abs" style="left:1022px;top:651px;width:13px;height:37px;background:linear-gradient(#7c8b9f,#56657a 45%,#5f6e84);border:1px solid #8fa0b8;border-right-color:#4a586c"></div>
 <!-- status bar -->
 <div class="abs" style="left:0;top:689px;width:1036px;height:22px;background:#f1efed"></div>
 <div class="abs" id="rctl" style="left:946.500px;top:691px;font-size:15.300px;line-height:18px;color:#4a4a4a;white-space:nowrap">Right Ctrl</div>
 <svg class="abs" style="left:737px;top:692px" width="210" height="17" viewBox="0 0 210 17">
  <!-- hdd -->
  <rect x=".8" y=".8" width="14" height="15" rx="2" fill="#6aaef0" stroke="#1a5fb4" stroke-width="1.200"/><circle cx="7" cy="7.500" r="4" fill="#dff0ff" stroke="#1a5fb4" stroke-width=".8"/><path d="M7 7.500 L4 13.500" stroke="#1a5fb4" stroke-width="1.200"/>
  <!-- cd -->
  <circle cx="28" cy="8.500" r="7.300" fill="#e4f0fc" stroke="#2a72c8" stroke-width="1.200"/><circle cx="28" cy="8.500" r="2.600" fill="#6aaef0" stroke="#2a72c8" stroke-width=".8"/>
  <!-- network -->
  <rect x="46" y="2" width="10.500" height="7.500" fill="#4a90e0" stroke="#1a4f9c" stroke-width="1"/><rect x="41.500" y="7" width="10.500" height="7.500" fill="#dbe9fa" stroke="#1a4f9c" stroke-width="1"/><path d="M44 16.500 H49.500" stroke="#1a4f9c" stroke-width="1"/>
  <!-- usb -->
  <path d="M63 15.500 L64.500 10.500 L73 2 Q75.500 .5 77 2.500 Q78 4.500 76.500 6 L68 14.500 Z" fill="#4aa0f0" stroke="#1a5fb4" stroke-width="1"/><path d="M63 15.500 L64.500 10.500 L68 14.500 Z" fill="#e8f0fa" stroke="#1a5fb4" stroke-width=".7"/>
  <!-- folder grey -->
  <path d="M83.500 4 H89 L90.500 5.500 H98.500 V15 H83.500 Z" fill="#d9d8d5" stroke="#b4b3b0" stroke-width=".9"/>
  <!-- monitor -->
  <rect x="104.500" y="1.500" width="15" height="11" fill="#3a8ae8" stroke="#1a4f9c" stroke-width=".9"/><rect x="104.500" y="1.500" width="15" height="4" fill="#6ab0f8"/><path d="M107 15.500 H117" stroke="#b9b9b9" stroke-width="2"/><rect x="105" y="12.500" width="14" height="1.800" fill="#f2f2f2" stroke="#aaa" stroke-width=".5"/>
  <!-- two windows -->
  <rect x="130" y="1.500" width="10" height="8" fill="#4a90e0" stroke="#1a4f9c" stroke-width="1"/><rect x="126" y="6" width="9.500" height="8.500" fill="#2a6ad0" stroke="#e8f0fa" stroke-width="1"/><rect x="125.500" y="5.500" width="10.500" height="9.500" fill="none" stroke="#1a4f9c" stroke-width=".7"/>
  <!-- chip -->
  <rect x="147.500" y="1.500" width="14" height="14" rx="2" fill="#6a7ae8" stroke="#2a3ab0" stroke-width="1.200" stroke-dasharray="1.500 1"/><rect x="150" y="4" width="9" height="9" fill="#dfe4fc"/><path d="M152.500 5.500 V9.500 Q154.500 12.500 156.500 9.500 V5.500" fill="none" stroke="#2a3ab0" stroke-width="1.400"/>
  <!-- globe arrows -->
  <circle cx="174" cy="9" r="6.800" fill="#bfe0fa" stroke="#1a5fb4" stroke-width="1.100"/><circle cx="179" cy="6.500" r="4.800" fill="#e4f2fc" stroke="#1a5fb4" stroke-width=".9"/><path d="M173 12.500 L178 7.500 L176 5.500 H182.500 V12 L180.500 10 L175.500 15 Z" fill="#4fc02a" stroke="#1f7a0a" stroke-width=".8"/>
  <!-- arrow box -->
  <rect x="188.800" y="1" width="14.500" height="14.500" rx="2" fill="#f4f8fe" stroke="#1a5fb4" stroke-width="1.500"/><path d="M194 3.500 H198 V8 H201 L196 13 L191 8 H194 Z" fill="#222"/>
 </svg>
 <svg class="abs" style="left:1024px;top:699px" width="10" height="10" viewBox="0 0 10 10"><g fill="#d2d0cc"><rect x="8" y="0" width="1.300" height="1.300"/><rect x="5" y="3" width="1.300" height="1.300"/><rect x="8" y="3" width="1.300" height="1.300"/><rect x="2" y="6" width="1.300" height="1.300"/><rect x="5" y="6" width="1.300" height="1.300"/><rect x="8" y="6" width="1.300" height="1.300"/></g></svg>
</div>
<!-- Terminal -->
<div class="win" id="term" style="left:162px;top:169px;width:669px;height:488px;background:#300a24;box-shadow:0 5px 24px rgba(0,0,0,.6),0 1px 5px rgba(0,0,0,.45)">
 <div class="tbar" style="height:27px;background:linear-gradient(#5f5d55,#4b4a44 40%,#3e3d39)"><svg class="wb" style="top:5.500px;left:7px"><use href="#aC"/></svg><svg class="wb" style="top:5.500px;left:26px"><use href="#aM"/></svg><svg class="wb" style="top:5.500px;left:45px"><use href="#aX"/></svg><span class="t" id="t_term" style="left:73.500px;top:6px;font-size:14.800px;color:#e0dcd3">kisec@ubuntu: ~</span></div>
<pre class="abs" id="tt" style="left:1px;top:29px"> pkts bytes target     prot opt in     out     source               desti
nation
<span class="g">kisec@ubuntu</span>:<span class="b">~</span>$ 
<span class="g">kisec@ubuntu</span>:<span class="b">~</span>$ sudo netfilter-persistent save
run-parts: executing /usr/share/netfilter-persistent/plugins.d/15-ip4tabl
es save
run-parts: executing /usr/share/netfilter-persistent/plugins.d/25-ip6tabl
es save
<span class="g">kisec@ubuntu</span>:<span class="b">~</span>$ sudo netfilter-persistent reload
run-parts: executing /usr/share/netfilter-persistent/plugins.d/15-ip4tabl
es start
run-parts: executing /usr/share/netfilter-persistent/plugins.d/25-ip6tabl
es start
<span class="g">kisec@ubuntu</span>:<span class="b">~</span>$ sudo vim /etc/sysctl.conf
<span class="g">kisec@ubuntu</span>:<span class="b">~</span>$ sudo vim /etc/sysctl.conf
<span class="g">kisec@ubuntu</span>:<span class="b">~</span>$ sudo vim /etc/sysctl.conf
<span class="g">kisec@ubuntu</span>:<span class="b">~</span>$ sudo sysctl -w net.ipv4.ip_forward=1
net.ipv4.ip_forward = 1
<span class="g">kisec@ubuntu</span>:<span class="b">~</span>$ ls .cuckoo/
agent/            elasticsearch/    signatures/       web/
analyzer/         __init__.py       storage/          whitelist/
conf/             log/              stuff/            yara/
.cwd              monitor/          supervisord/
distributed/      pidfiles/         supervisord.conf
<span class="g">kisec@ubuntu</span>:<span class="b">~</span>$ ls .cuckoo/agent/
agent.py  <span class="g">agent.sh</span>
<span class="g">kisec@ubuntu</span>:<span class="b">~</span>$ <span id="cur" style="display:inline-block;width:9px;height:16px;background:#fff;vertical-align:-3px"></span></pre>
 <div class="abs" style="left:666px;top:421px;width:3px;height:67px;background:#d0705a"></div>
</div>

<!-- tooltip -->
<svg class="abs" style="left:51.500px;top:335.500px;z-index:60" width="173" height="30" viewBox="0 0 173 30">
<path d="M2 15 L15.500 2 H166 Q170.500 2 170.500 6.500 V23.500 Q170.500 28 166 28 H15.500 Z" fill="#2c212b" fill-opacity=".96" stroke="#7d6d7b" stroke-opacity=".9" stroke-width="1"/>
</svg>
<div class="abs" id="tip" style="left:76px;top:341.800px;z-index:61;font-size:15.600px;line-height:18px;color:#fff;white-space:nowrap">LibreOffice Impress</div>
</body></html>
